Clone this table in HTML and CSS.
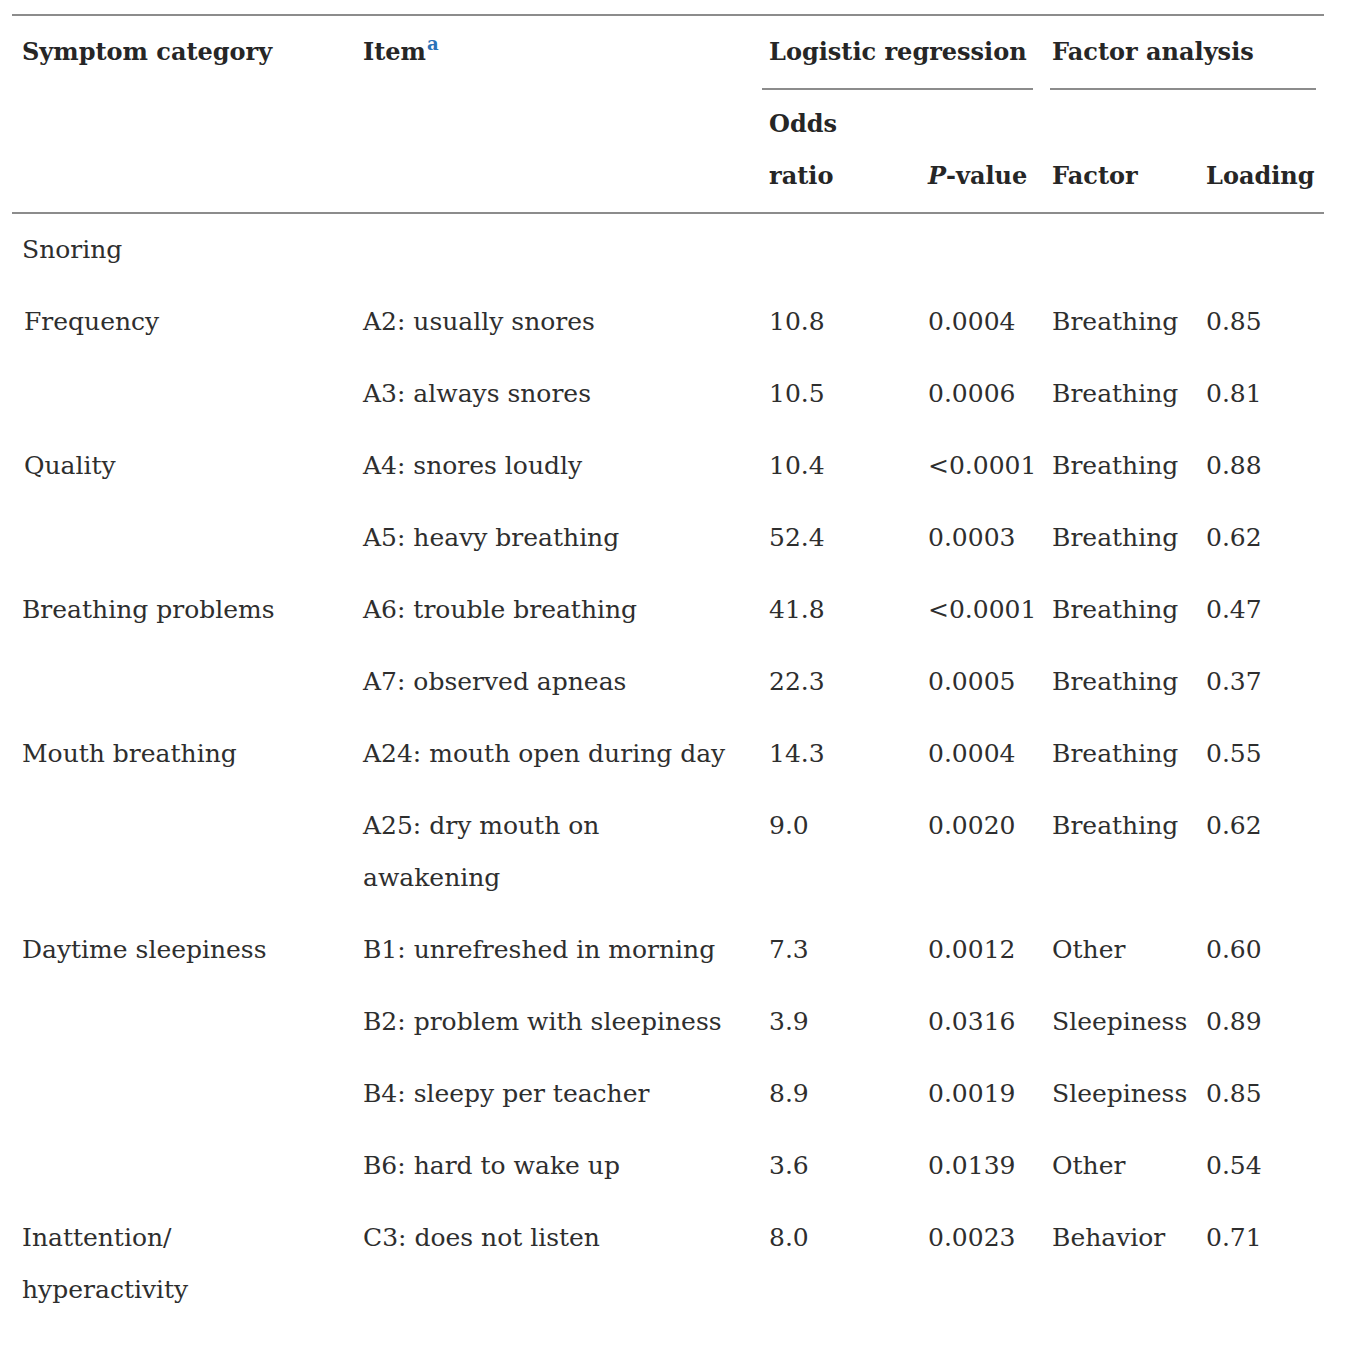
FILE: index.html
```html
<!DOCTYPE html>
<html lang="en">
<head>
<meta charset="utf-8">
<title>Table</title>
<link rel="stylesheet" href="styles.css">
</head>
<body>
<table class="data">
  <colgroup>
    <col class="c1"><col class="c2"><col class="c3"><col class="c4"><col class="c5"><col class="c6">
  </colgroup>
  <thead>
    <tr class="head-top">
      <th rowspan="2" class="top">Symptom category</th>
      <th rowspan="2" class="top">Item<sup class="fn">a</sup></th>
      <th colspan="2" class="group"><div class="group-label lr">Logistic regression</div></th>
      <th colspan="2" class="group"><div class="group-label fa">Factor analysis</div></th>
    </tr>
    <tr class="head-sub">
      <th>Odds<br>ratio</th>
      <th class="bottom"><i>P</i>-value</th>
      <th class="bottom">Factor</th>
      <th class="bottom">Loading</th>
    </tr>
  </thead>
  <tbody>
    <tr><td>Snoring</td><td></td><td></td><td></td><td></td><td></td></tr>
    <tr><td class="sub">Frequency</td><td>A2: usually snores</td><td>10.8</td><td>0.0004</td><td>Breathing</td><td>0.85</td></tr>
    <tr><td></td><td>A3: always snores</td><td>10.5</td><td>0.0006</td><td>Breathing</td><td>0.81</td></tr>
    <tr><td class="sub">Quality</td><td>A4: snores loudly</td><td>10.4</td><td>&lt;0.0001</td><td>Breathing</td><td>0.88</td></tr>
    <tr><td></td><td>A5: heavy breathing</td><td>52.4</td><td>0.0003</td><td>Breathing</td><td>0.62</td></tr>
    <tr><td>Breathing problems</td><td>A6: trouble breathing</td><td>41.8</td><td>&lt;0.0001</td><td>Breathing</td><td>0.47</td></tr>
    <tr><td></td><td>A7: observed apneas</td><td>22.3</td><td>0.0005</td><td>Breathing</td><td>0.37</td></tr>
    <tr><td>Mouth breathing</td><td>A24: mouth open during day</td><td>14.3</td><td>0.0004</td><td>Breathing</td><td>0.55</td></tr>
    <tr><td></td><td>A25: dry mouth on<br>awakening</td><td>9.0</td><td>0.0020</td><td>Breathing</td><td>0.62</td></tr>
    <tr><td>Daytime sleepiness</td><td>B1: unrefreshed in morning</td><td>7.3</td><td>0.0012</td><td>Other</td><td>0.60</td></tr>
    <tr><td></td><td>B2: problem with sleepiness</td><td>3.9</td><td>0.0316</td><td>Sleepiness</td><td>0.89</td></tr>
    <tr><td></td><td>B4: sleepy per teacher</td><td>8.9</td><td>0.0019</td><td>Sleepiness</td><td>0.85</td></tr>
    <tr><td></td><td>B6: hard to wake up</td><td>3.6</td><td>0.0139</td><td>Other</td><td>0.54</td></tr>
    <tr><td>Inattention/<br>hyperactivity</td><td>C3: does not listen</td><td>8.0</td><td>0.0023</td><td>Behavior</td><td>0.71</td></tr>
    <tr><td></td><td>C4: difficulty organizing</td><td></td><td></td><td>Behavior</td><td></td></tr>
  </tbody>
</table>
</body>
</html>
```
FILE: styles.css
```css
html, body {
  margin: 0;
  padding: 0;
  background: #ffffff;
}

body {
  padding: 14px 48px 0 12px;
  font-family: "DejaVu Serif", "Liberation Serif", serif;
  color: #2e2e2e;
}

.data {
  width: 1312px;
  table-layout: fixed;
  border-collapse: collapse;
  font-size: 25px;
  line-height: 52px;
  border-top: 2px solid #8c8c8c;
}

.c1 { width: 341px; }
.c2 { width: 406px; }
.c3 { width: 159px; }
.c4 { width: 124px; }
.c5 { width: 154px; }
.c6 { width: 128px; }

th, td {
  padding: 10px 0 10px 10px;
  text-align: left;
  vertical-align: top;
  white-space: nowrap;
}

th {
  font-weight: bold;
  font-size: 24px;
  color: #262626;
}

thead {
  border-bottom: 2px solid #8c8c8c;
}

th.group {
  padding: 10px 0 0 0;
}

.group-label {
  padding-bottom: 10px;
  border-bottom: 2px solid #8c8c8c;
}

.group-label.lr {
  margin: 0 9px 0 3px;
  padding-left: 7px;
}

.group-label.fa {
  margin: 0 8px 0 8px;
  padding-left: 2px;
}

.head-sub th {
  padding-top: 8px;
}

.head-sub th.bottom {
  vertical-align: bottom;
}

.fn {
  color: #2a73b8;
  font-size: 18px;
  font-weight: bold;
  line-height: 0;
  vertical-align: 10px;
  margin-left: 1px;
}

th i {
  font-style: italic;
}

td.sub {
  padding-left: 12px;
}
```
